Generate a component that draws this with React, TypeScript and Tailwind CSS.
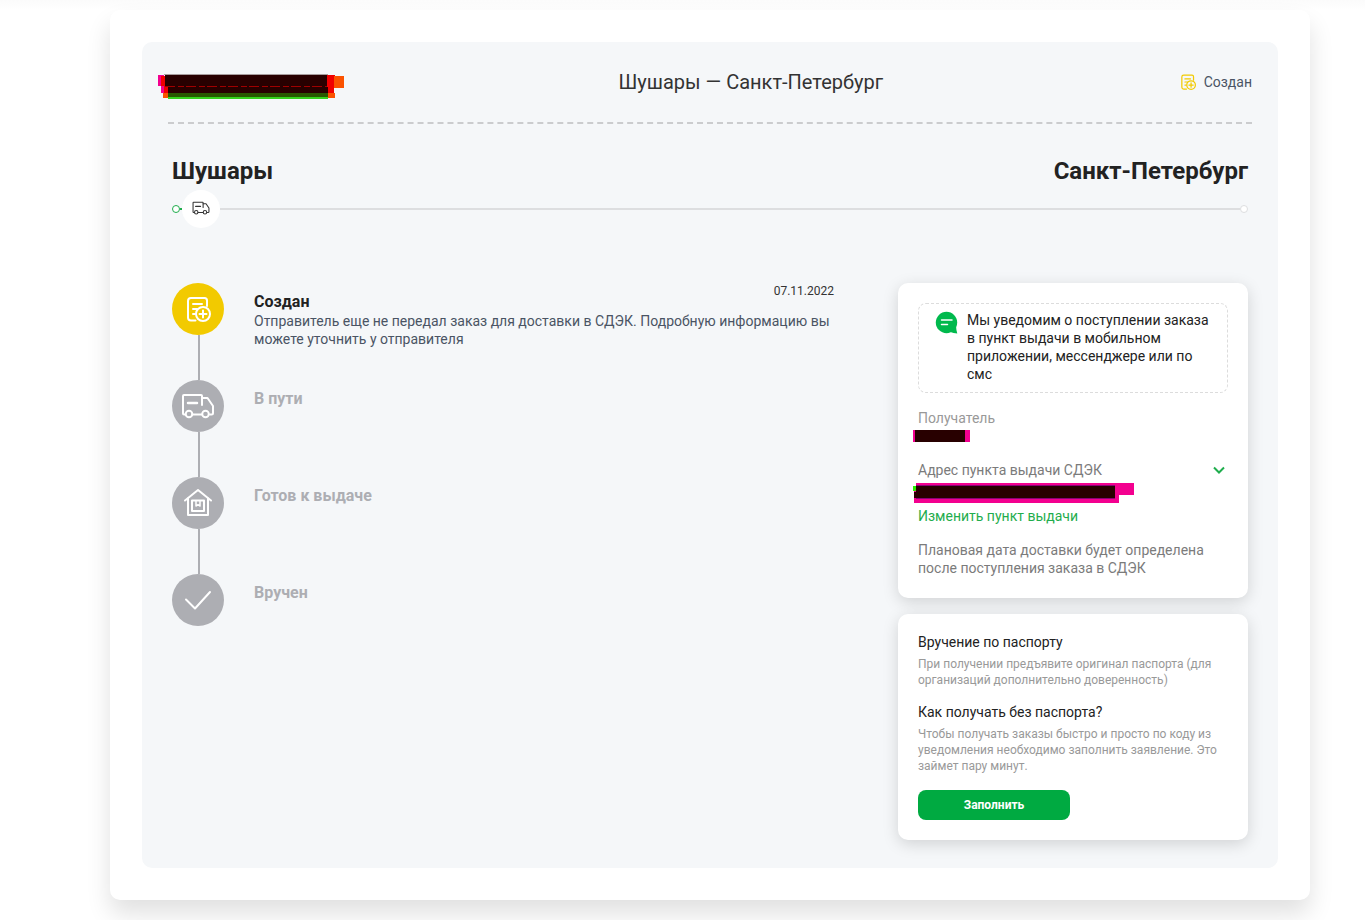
import { useState } from "react";
import type { ReactNode } from "react";

type Step = {
  id: string;
  title: string;
  date?: string;
  description?: string;
  icon: ReactNode;
};

function CreatedIcon({ className }: { className: string }) {
  return (
    <svg
      viewBox="0 0 26 26"
      className={className}
      fill="none"
      stroke="currentColor"
      strokeWidth="2"
      strokeLinecap="round"
      strokeLinejoin="round"
      aria-hidden="true"
    >
      <path d="M10.500 24.500H6a3 3 0 0 1-3-3V5a3 3 0 0 1 3-3h13.500A2.500 2.500 0 0 1 22 4.500V10" />
      <path d="M8 8h9M8 13h4M8 18h2" />
      <circle cx="18" cy="18" r="7" />
      <path d="M18 14.500v7M14.500 18h7" />
    </svg>
  );
}

function TruckIcon({ className }: { className: string }) {
  return (
    <svg
      viewBox="0 0 34 26"
      className={className}
      fill="none"
      stroke="currentColor"
      strokeWidth="2"
      strokeLinecap="round"
      strokeLinejoin="round"
      aria-hidden="true"
    >
      <path d="M4 21.500H3A1 1 0 0 1 2 20.500V3a1 1 0 0 1 1-1h17a1 1 0 0 1 1 1v9" />
      <path d="M21 5h5.500l5.500 8v7a1.500 1.500 0 0 1-1.500 1.500H29M11.500 21.500h9" />
      <path d="M7 10h9" strokeWidth="2.500" />
      <circle cx="8" cy="21" r="3.300" />
      <circle cx="24.500" cy="21" r="3.300" />
    </svg>
  );
}

function HouseIcon() {
  return (
    <svg
      viewBox="0 0 28 28"
      className="h-7 w-7"
      fill="none"
      stroke="currentColor"
      strokeWidth="2"
      strokeLinecap="round"
      strokeLinejoin="round"
      aria-hidden="true"
    >
      <path d="M1 11.500 14 1l13 10.500" />
      <path d="M4 9.500V26h20V9.500" />
      <path d="M8 11.500h12V22H8z" />
      <path d="M12 12v5l2-1.300 2 1.300v-5" strokeWidth="1.500" />
    </svg>
  );
}

function CheckIcon() {
  return (
    <svg
      viewBox="0 0 28 20"
      className="h-5 w-7"
      fill="none"
      stroke="currentColor"
      strokeWidth="2"
      strokeLinecap="round"
      strokeLinejoin="round"
      aria-hidden="true"
    >
      <path d="M2 9.500 11 18.500 26 2" />
    </svg>
  );
}

function ChatIcon() {
  return (
    <svg viewBox="0 0 24 24" className="h-6 w-6 shrink-0" aria-hidden="true">
      <circle cx="11.500" cy="11.500" r="10.700" fill="#00b94d" />
      <path d="M21 15q.2 4 1.300 7.500-4-.2-7-1.500z" fill="#00b94d" />
      <path d="M6.500 9H17M6.500 13.500h6" stroke="#fff" strokeWidth="1.500" strokeLinecap="round" />
    </svg>
  );
}

// Painted-over order number
function HiddenNumber() {
  return (
    <svg
      viewBox="0 0 186 25"
      className="-mr-[22px] -ml-[10px] h-[25px] w-[186px]"
      shapeRendering="crispEdges"
      aria-hidden="true"
    >
      <path d="M0 1h6v11H0zM3 12h4v7H3z" fill="#f3008f" />
      <path d="M3 2h7v17H6V12H3zM169 1h8v11h-8zM169 12h7v7h-7z" fill="#f00000" />
      <path d="M5 19h5v5H5zM170 19h7v5h-7zM176 2h10v12h-10z" fill="#fb5200" />
      <path d="M6 0h164v1H6z" fill="#a79d9e" />
      <path d="M7 1h162v12H7zM10 13h160v6H10z" fill="#280000" />
      <path d="M7 12.500h162" stroke="#a00000" strokeDasharray="10 3 6 2" />
      <path d="M10 19h160v4H10z" fill="#285800" />
      <path d="M10 23h160v2H10z" fill="#35d21c" />
    </svg>
  );
}

function HiddenName() {
  return (
    <svg viewBox="0 0 58 12" className="-ml-[5px] h-3 w-[58px]" shapeRendering="crispEdges" aria-hidden="true">
      <path d="M0 0h57v12H0z" fill="#f3008f" />
      <path d="M2 0h50v12H2z" fill="#280000" />
    </svg>
  );
}

function HiddenAddress() {
  return (
    <svg viewBox="0 0 222 20" className="-ml-[5px] h-5 w-[222px]" shapeRendering="crispEdges" aria-hidden="true">
      <path d="M3 0h218v12H3zM1 8h205v12H1z" fill="#f3008f" />
      <path d="M0 3h3v5H0z" fill="#28f000" />
      <path d="M3 2h199v14H3z" fill="#8a0078" />
      <path d="M3 3h199v12H3zM1 9h4v6H1z" fill="#280000" />
    </svg>
  );
}

const steps: Step[] = [
  {
    id: "created",
    title: "Создан",
    date: "07.11.2022",
    description:
      "Отправитель еще не передал заказ для доставки в СДЭК. Подробную информацию вы можете уточнить у отправителя",
    icon: <CreatedIcon className="h-[26px] w-[26px]" />,
  },
  { id: "transit", title: "В пути", icon: <TruckIcon className="h-[26px] w-[34px]" /> },
  { id: "ready", title: "Готов к выдаче", icon: <HouseIcon /> },
  { id: "delivered", title: "Вручен", icon: <CheckIcon /> },
];

function StepItem({ step, active, last }: { step: Step; active: boolean; last: boolean }) {
  return (
    <li className="flex gap-[30px]">
      <div className="shrink-0">
        <div
          className={`flex h-[52px] w-[52px] items-center justify-center rounded-full text-white ${
            active ? "bg-[#f2ca00]" : "bg-[#adaeb3]"
          }`}
        >
          {step.icon}
        </div>
        {!last && <div className="ml-[26px] h-[45px] w-0.5 bg-[#adaeb3]" />}
      </div>
      <div className="flex-1">
        <div className="flex items-start justify-between">
          <h3 className={`pt-[9px] text-base leading-5 font-bold ${active ? "text-[#222]" : "text-[#adaeb3]"}`}>
            {step.title}
          </h3>
          {step.date && <time className="text-xs leading-4 text-[#333]">{step.date}</time>}
        </div>
        {step.description && <p className="text-sm leading-[18px] text-[#4a5464]">{step.description}</p>}
      </div>
    </li>
  );
}

export default function App() {
  const [current] = useState("created");
  const [open, setOpen] = useState(false);

  return (
    <div className="overflow-x-hidden bg-white pr-[55px] pb-5 pl-[110px] font-[Roboto,sans-serif] text-[#333]">
      <div className="-mr-[55px] -ml-[110px] h-[10px] bg-linear-to-b from-[#fbfbfb] to-white" />
      <main className="mx-auto max-w-[1200px] rounded-[10px] bg-white p-8 shadow-[0_14px_24px_rgba(0,0,0,0.12)]">
        <section className="rounded-[10px] bg-[#f5f7f9] pb-7">
          {/* Order summary */}
          <header className="mx-[26px] flex h-[82px] items-center justify-between border-b-2 border-dashed border-[#cbccce]">
            <div className="pt-2">
              <HiddenNumber />
            </div>
            <h1 className="text-xl">Шушары — Санкт-Петербург</h1>
            <div className="flex items-center gap-2 text-sm text-[#4a5464]">
              <CreatedIcon className="h-4 w-4 text-[#f2ca00]" />
              <span>Создан</span>
            </div>
          </header>

          {/* Route */}
          <div className="px-[30px] pt-8">
            <div className="flex justify-between text-2xl leading-[30px] font-bold text-[#222]">
              <h2>Шушары</h2>
              <h2>Санкт-Петербург</h2>
            </div>
            <div className="mt-1 flex items-center">
              <span className="h-2 w-2 rounded-full border border-[#1fad4d] bg-white" />
              <span className="h-0.5 w-0.5 bg-[#1fad4d]" />
              <span className="flex h-[38px] w-[38px] items-center justify-center rounded-full bg-white pb-0.5">
                <TruckIcon className="h-[14px] w-[18px] text-[#333]" />
              </span>
              <span className="h-0.5 flex-1 bg-[#dddee0]" />
              <span className="h-2 w-2 rounded-full border border-[#dddee0] bg-white" />
            </div>
          </div>

          <div className="mt-[55px] grid grid-cols-[1fr_350px] gap-16 px-[30px]">
            <ol>
              {steps.map((step, i) => (
                <StepItem
                  key={step.id}
                  step={step}
                  active={step.id === current}
                  last={i === steps.length - 1}
                />
              ))}
            </ol>

            <aside className="space-y-4">
              {/* Pickup info */}
              <div className="rounded-[10px] bg-white p-5 pb-[21px] text-sm leading-[18px] text-[#7b7b7b] shadow-[0_4px_16px_rgba(0,0,0,0.15)]">
                <div className="flex gap-2 rounded-[8px] border border-dashed border-[#dcdcdc] px-4 pt-[7px] pb-[9px] text-[#222]">
                  <ChatIcon />
                  <p>Мы уведомим о поступлении заказа в пункт выдачи в мобильном приложении, мессенджере или по смс</p>
                </div>

                <div className="mt-4 text-[#999]">Получатель</div>
                <div className="flex h-[18px] items-center">
                  <HiddenName />
                </div>

                <div className="mt-4 flex items-center justify-between">
                  <span>Адрес пункта выдачи СДЭК</span>
                  <button
                    type="button"
                    aria-label="Адрес пункта выдачи"
                    aria-expanded={open}
                    onClick={() => setOpen(!open)}
                    className="flex h-[18px] w-[18px] items-center justify-center text-[#1fad4d]"
                  >
                    <svg viewBox="0 0 12 8" className="h-2 w-3" fill="none" stroke="currentColor" strokeWidth="2">
                      <path d="M1 1.500 6 6.500l5-5" />
                    </svg>
                  </button>
                </div>
                <div className="flex h-7 items-center">
                  <HiddenAddress />
                </div>
                <a href="#" className="block text-[#1fad4d]">
                  Изменить пункт выдачи
                </a>

                <p className="mt-4">Плановая дата доставки будет определена после поступления заказа в СДЭК</p>
              </div>

              {/* Passport info */}
              <div className="rounded-[10px] bg-white p-5 text-xs leading-4 text-[#999] shadow-[0_4px_16px_rgba(0,0,0,0.15)]">
                <h4 className="mb-1.5 text-sm leading-4 text-[#222]">Вручение по паспорту</h4>
                <p>При получении предъявите оригинал паспорта (для организаций дополнительно доверенность)</p>
                <h4 className="mt-4 mb-1.5 text-sm leading-4 text-[#222]">Как получать без паспорта?</h4>
                <p>
                  Чтобы получать заказы быстро и просто по коду из уведомления необходимо заполнить заявление. Это
                  займет пару минут.
                </p>
                <button type="button" className="mt-4 h-[30px] w-[152px] rounded-[8px] bg-[#00aa41] font-bold text-white">
                  Заполнить
                </button>
              </div>
            </aside>
          </div>
        </section>
      </main>
    </div>
  );
}
